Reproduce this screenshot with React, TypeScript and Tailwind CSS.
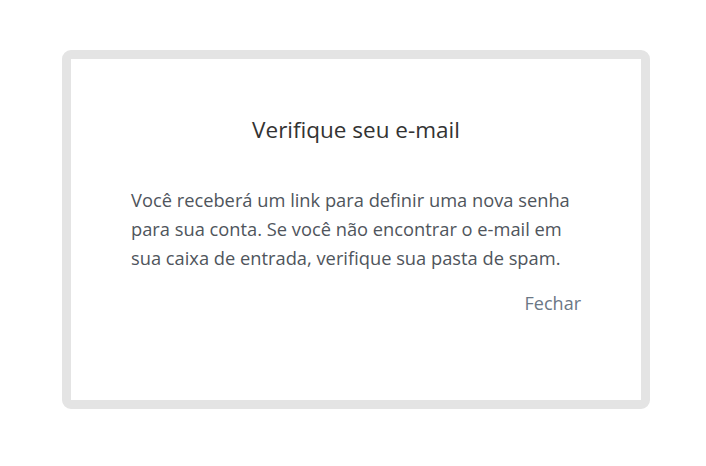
export default function App() {
  return (
    <div className="flex h-[466px] w-[706px] items-start justify-start bg-white pt-[50px] pl-[62px] font-['Open_Sans',sans-serif]">
      <div className="w-[588px] rounded-[9px] border-[9px] border-[#e4e4e4] bg-white px-[60px] pt-[56px] pb-[82px]">
        <h2 className="text-center text-[22.5px] leading-[30px] text-[#333333]">Verifique seu e-mail</h2>
        <p className="mt-[40px] text-[18.3px] leading-[29px] text-[#4f555c]">
          Você receberá um link para definir uma nova senha para sua conta. Se você não encontrar o e-mail em sua caixa de entrada, verifique sua pasta de spam.
        </p>
        <div className="mt-[17px] flex justify-end">
          <button className="text-[18px] leading-[29px] text-[#6b7785]">Fechar</button>
        </div>
      </div>
    </div>
  );
}
